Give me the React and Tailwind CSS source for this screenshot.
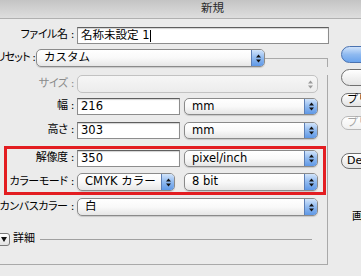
const jp = { fontFamily: '"DejaVu Sans", "Noto Sans CJK JP", sans-serif' };

function Label({ children, w = "w-[77px]", className = "pr-[3px] tracking-[-0.4px]" }) {
  return (
    <div
      className={`${w} ${className} shrink-0 flex justify-end whitespace-nowrap text-[11px] text-black [font-feature-settings:'palt']`}
    >
      {children}
    </div>
  );
}

function Field({ value, w, cursor }) {
  return (
    <div
      className={`${w} h-full shrink-0 bg-white border border-[#8d8d8d] border-t-[#5f5f5f] shadow-[inset_0_1px_1px_rgba(0,0,0,0.18)] flex items-center pl-[3px] text-[11.5px] text-black`}
    >
      {value}
      {cursor && <span className="ml-[1px] w-px h-[12px] bg-black" />}
    </div>
  );
}

function Arrows({ color = "#111" }) {
  return (
    <svg width="5" height="9" viewBox="0 0 5 9">
      <path d="M2.5 0.5 L5 3.5 L0 3.5 Z" fill={color} />
      <path d="M0 5.5 L5 5.5 L2.5 8.5 Z" fill={color} />
    </svg>
  );
}

function Select({ value, w, disabled }) {
  return (
    <div
      className={`${w} h-full shrink-0 flex rounded-[5px] border overflow-hidden ${
        disabled
          ? "border-[#c2c2c2] bg-gradient-to-b from-[#f6f6f6] to-[#ececec]"
          : "border-[#8a8a8a] bg-gradient-to-b from-white via-[#f9f9f9] to-[#e6e6e6] shadow-[0_1px_1px_rgba(0,0,0,0.15)]"
      }`}
    >
      <div className="flex-1 flex items-center pl-[7px] text-[11.5px] text-black whitespace-nowrap">
        {value}
      </div>
      {disabled ? (
        <div className="w-[13px] flex items-center justify-center">
          <Arrows color="#9a9a9a" />
        </div>
      ) : (
        <div className="w-[13px] flex items-center justify-center bg-gradient-to-b from-[#d2e4fa] via-[#8fb9ef] to-[#5f98e6] border-l border-[#5d7fb5]">
          <Arrows />
        </div>
      )}
    </div>
  );
}

function AquaButton({ children, h, blue, disabled, className = "" }) {
  return (
    <div
      className={`${h} w-[90px] shrink-0 rounded-full border flex items-center pl-[5px] text-[11px] whitespace-nowrap ${
        blue
          ? "border-[#4a72b0] bg-gradient-to-b from-[#cfe2fa] via-[#8fbaf0] to-[#6aa3ec]"
          : disabled
          ? "border-[#b8b8b8] bg-gradient-to-b from-white to-[#f0f0f0] text-[#a5a5a5]"
          : "border-[#707070] bg-gradient-to-b from-white to-[#e4e4e4] text-black"
      } ${className}`}
    >
      {children}
    </div>
  );
}

export default function App() {
  return (
    <div className="w-[361px] h-[276px] overflow-hidden bg-[#ebebeb]" style={jp}>
      {/* TITLE BAR */}
      <div className="h-[19px] bg-gradient-to-b from-[#c4c4c4] to-[#dedede] border-b border-[#b0b0b0] flex items-center pl-[201px] text-[11.5px] text-[#2a2a2a]">
        新規
      </div>

      <div className="flex">
        {/* MAIN */}
        <div className="w-[328px] shrink-0 pt-[8px]">
          <div className="flex h-[17px] items-center">
            <Label>ファイル名 :</Label>
            <Field value="名称未設定 1" w="w-[252px]" cursor />
          </div>

          <div className="flex h-[18px] mt-[5px] items-center">
            <Label w="w-[36px]" className="pr-[1px] tracking-[-0.9px]">
              プリセット :
            </Label>
            <Select value="カスタム" w="w-[229px]" />
            <div className="flex-1 self-stretch mt-[9px] border-t border-r border-[#a9a9a9]" />
          </div>

          {/* GROUP BOX */}
          <div className="border-r border-b border-[#a9a9a9] pb-[18px]">
            <div className="flex h-[18px] mt-[8px] items-center">
              <Label>
                <span className="text-[#8a8a8a]">サイズ :</span>
              </Label>
              <Select value="" w="w-[241px]" disabled />
            </div>

            <div className="flex h-[17px] mt-[5px] items-center">
              <Label>幅 :</Label>
              <Field value="216" w="w-[103px]" />
              <div className="ml-[4px] h-full">
                <Select value="mm" w="w-[134px]" />
              </div>
            </div>

            <div className="flex h-[17px] mt-[7px] items-center">
              <Label>高さ :</Label>
              <Field value="303" w="w-[103px]" />
              <div className="ml-[4px] h-full">
                <Select value="mm" w="w-[134px]" />
              </div>
            </div>

            {/* HIGHLIGHTED ROWS */}
            <div className="relative mt-[11px]">
              <div className="flex h-[17px] items-center">
                <Label>解像度 :</Label>
                <Field value="350" w="w-[103px]" />
                <div className="ml-[4px] h-full">
                  <Select value="pixel/inch" w="w-[134px]" />
                </div>
              </div>
              <div className="flex h-[18px] mt-[6px] items-center">
                <Label>カラーモード :</Label>
                <Select value="CMYK カラー" w="w-[98px]" />
                <div className="ml-[9px] h-full">
                  <Select value="8 bit" w="w-[134px]" />
                </div>
              </div>
              <div className="absolute left-[4px] right-[1px] top-[-4px] bottom-[-4px] border-[3px] border-[#e31d21] pointer-events-none" />
            </div>

            <div className="flex h-[18px] mt-[7px] items-center">
              <Label>カンバスカラー :</Label>
              <Select value="白" w="w-[241px]" />
            </div>

            <div className="flex h-[13px] mt-[17px] items-center">
              <div className="ml-[-4px] w-[14px] h-[13px] shrink-0 rounded-[3px] border border-[#7a7a7a] bg-gradient-to-b from-white to-[#e2e2e2] flex items-center justify-end pr-[2px]">
                <svg width="6" height="5" viewBox="0 0 6 5">
                  <path d="M0 0 L6 0 L3 5 Z" fill="#111" />
                </svg>
              </div>
              <span className="ml-[3px] text-[11px] text-black">詳細</span>
              <div className="ml-[5px] mr-[15px] flex-1 h-px bg-[#a0a0a0]" />
            </div>
          </div>
        </div>

        {/* RIGHT BUTTONS */}
        <div className="ml-[13px] pt-[27px] flex flex-col">
          <AquaButton h="h-[17px]" blue>
            <span className="pl-[28px]">OK</span>
          </AquaButton>
          <AquaButton h="h-[17px]" className="mt-[6px]">
            <span className="pl-[22px]">キャンセル</span>
          </AquaButton>
          <AquaButton h="h-[14px]" className="mt-[7px]">
            プリセットを保存...
          </AquaButton>
          <AquaButton h="h-[14px]" className="mt-[9px]" disabled>
            プリセットを削除...
          </AquaButton>
          <AquaButton h="h-[16px]" className="mt-[23px]">
            Device Central...
          </AquaButton>
          <div className="mt-[40px] pl-[11px] text-[11px] text-black whitespace-nowrap">
            画像サイズ :
          </div>
        </div>
      </div>
    </div>
  );
}
